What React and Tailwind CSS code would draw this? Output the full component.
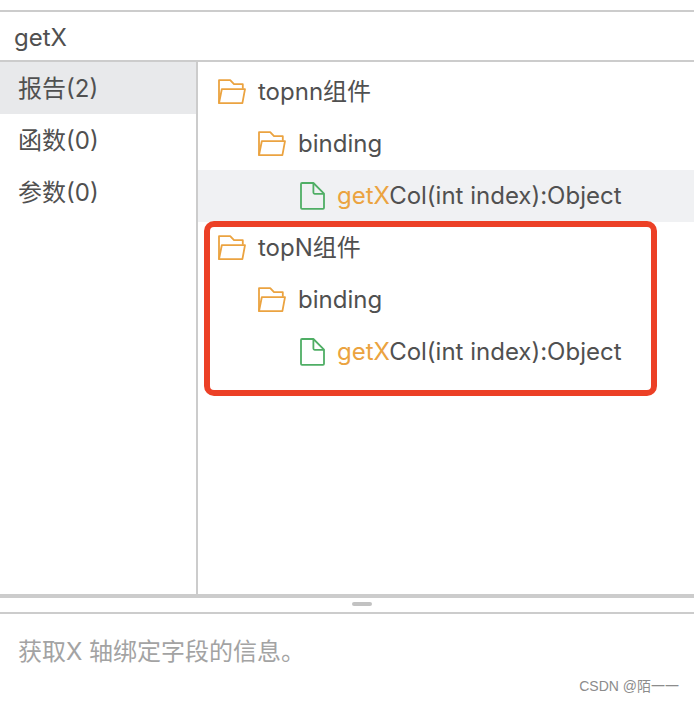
import { useState } from 'react';
import clsx from 'clsx';

const categories = [
  { id: 'report', label: '报告', count: 2 },
  { id: 'function', label: '函数', count: 0 },
  { id: 'param', label: '参数', count: 0 },
];

const groups = [
  { id: 'topnn', name: 'topnn组件', marked: false },
  { id: 'topn', name: 'topN组件', marked: true },
];

function FolderIcon() {
  return (
    <svg className="h-[26px] w-7 shrink-0" viewBox="0 0 28 26" fill="none" stroke="#eba340" strokeWidth="1.8" strokeLinejoin="round" aria-hidden="true">
      <path d="M1 24.2V1.2h11.2l3.8 4h8.8v4.6" />
      <path d="M1 24.2 3.8 10.2H27L24.4 24.2Z" />
    </svg>
  );
}

function FileIcon() {
  return (
    <svg className="h-7 w-[25px] shrink-0" viewBox="0 0 25 28" fill="none" stroke="#4fae65" strokeWidth="1.8" strokeLinejoin="round" aria-hidden="true">
      <path d="M2 1h11.4L24 11.6v14.2a1 1 0 0 1-1 1H2a1 1 0 0 1-1-1V2a1 1 0 0 1 1-1Z" />
      <path d="M13.4 1v9.6a1.2 1.2 0 0 0 1.2 1.2H24" />
    </svg>
  );
}

function TreeGroup({ group, selected, onSelect }) {
  return (
    <li className="relative">
      <button type="button" className="flex h-13 w-full items-center gap-3 pl-5 text-left">
        <FolderIcon />
        <span>{group.name}</span>
      </button>
      <button type="button" className="flex h-13 w-full items-center gap-3 pl-15 text-left">
        <FolderIcon />
        <span>binding</span>
      </button>
      <button
        type="button"
        onClick={() => onSelect(group.id)}
        className={clsx('flex h-13 w-full items-center gap-3 pl-[102px] text-left whitespace-nowrap', selected && 'bg-[#f0f1f3]')}
      >
        <FileIcon />
        <span>
          <span className="text-[#eba340]">getX</span>Col(int index):Object
        </span>
      </button>
      {group.marked && (
        <div className="pointer-events-none absolute -top-px -bottom-[18px] left-1.5 w-[453px] rounded-[10px] border-6 border-[#ec4026]" />
      )}
    </li>
  );
}

export default function App() {
  const [keyword, setKeyword] = useState('getX');
  const [category, setCategory] = useState('report');
  const [selected, setSelected] = useState('topnn');

  return (
    <div className="flex min-h-screen flex-col bg-white pt-2.5 font-[Inter,'Noto_Sans_CJK_SC',sans-serif] text-2xl text-[#505050]">
      <input
        type="text"
        aria-label="搜索"
        value={keyword}
        onChange={(e) => setKeyword(e.target.value)}
        className="h-13 w-full border-y-2 border-[#cccccc] px-3.5 pt-0.5 outline-none"
      />

      <main className="flex flex-1">
        <nav className="w-[198px] shrink-0 border-r-2 border-[#cccccc]">
          {categories.map((item) => (
            <button
              key={item.id}
              type="button"
              onClick={() => setCategory(item.id)}
              className={clsx('flex h-13 w-full items-center pt-0.5 pl-4.5', category === item.id && 'bg-[#e8e9eb]')}
            >
              {item.label}({item.count})
            </button>
          ))}
        </nav>
        <ul className="min-w-0 flex-1 pt-1">
          {groups.map((group) => (
            <TreeGroup key={group.id} group={group} selected={selected === group.id} onSelect={setSelected} />
          ))}
        </ul>
      </main>

      <div className="flex h-5 justify-center border-t-4 border-b-2 border-[#cccccc] pt-1 pl-[30px]">
        <div className="h-1 w-5 rounded-full bg-[#c2c2c2]" />
      </div>

      <footer className="flex flex-col pt-5 pb-1.5">
        <p className="pl-4.5 leading-9 text-[#a3a3a3]">获取X 轴绑定字段的信息。</p>
        <span className="self-end pt-1.5 pr-[15px] font-['Liberation_Sans','Noto_Sans_CJK_SC',sans-serif] text-sm leading-5 text-[#8c8c8c]">
          CSDN @陌一一
        </span>
      </footer>
    </div>
  );
}
